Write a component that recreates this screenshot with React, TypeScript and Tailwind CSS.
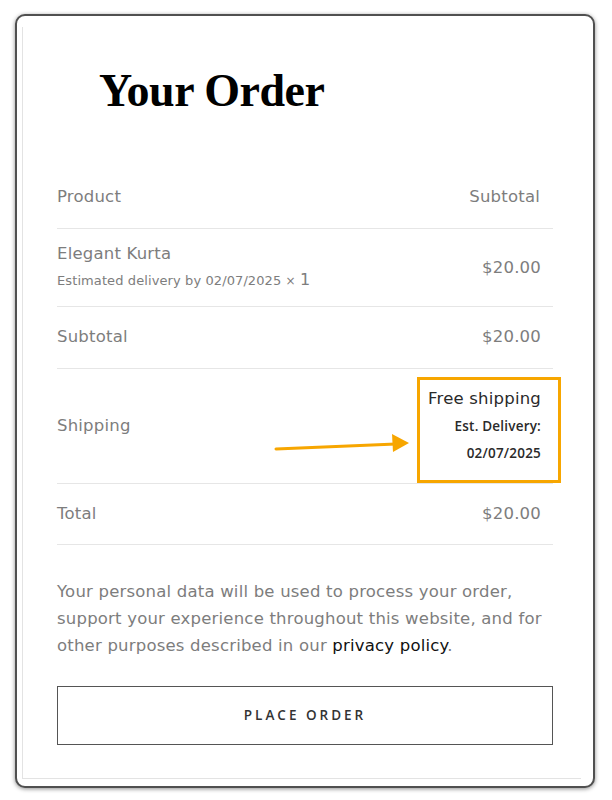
import React from "react";

const sans = { fontFamily: '"DejaVu Sans", "Open Sans", sans-serif' };
const open = { fontFamily: '"Open Sans", "DejaVu Sans", sans-serif' };

function Row({ left, right, className = "" }: { left: React.ReactNode; right: React.ReactNode; className?: string }) {
  return (
    <div className={`flex items-center justify-between border-b border-[#e6e6e6] ${className}`}>
      <div>{left}</div>
      <div className="pr-[12px] text-right">{right}</div>
    </div>
  );
}

export default function App() {
  return (
    <div className="relative w-[612px] h-[800px] bg-white pt-[14px] pl-[15px]" style={sans}>
      <div className="w-[580px] h-[774px] border-2 border-[#505050] rounded-[10px] shadow-[0_1px_4px_rgba(0,0,0,0.45)] bg-white overflow-hidden">
        <div className="ml-[5px] mt-[11px] w-[559px] h-[752px] border-l border-b border-[#e3e3e3] pl-[34px]">
          <div className="w-[496px] text-[#7d7d7d] text-[16.5px] tracking-[0.2px]">
            <h1
              className="ml-[42px] pt-[41px] text-[46px] leading-[46px] font-bold text-black tracking-[-0.5px]"
              style={{ fontFamily: '"Liberation Serif", "Times New Roman", serif' }}
            >
              Your Order
            </h1>
            <div className="mt-[53px]">
              <Row className="h-[62px]" left="Product" right={<span className="pr-[1px]">Subtotal</span>} />
              <div className="flex items-center justify-between border-b border-[#e6e6e6] h-[78px]">
                <div>
                  <div className="leading-[22px]">Elegant Kurta</div>
                  <div className="mt-[4px] text-[13px] leading-[22px] tracking-[0.1px]">
                    Estimated delivery by 02/07/2025 <span className="text-[12px]">×</span>{" "}
                    <span className="text-[16px]">1</span>
                  </div>
                </div>
                <div className="pr-[12px] pt-[2px]">$20.00</div>
              </div>
              <Row className="h-[62px]" left="Subtotal" right="$20.00" />
              <div className="flex items-center justify-between border-b border-[#e6e6e6] h-[115px]">
                <div className="pt-[1px]">Shipping</div>
                <div className="pr-[12px] text-right text-[#2a2a2a] pt-[1px]">
                  <div className="leading-[24px] text-[16.5px]">Free shipping</div>
                  <div className="mt-[2px] leading-[27px] text-[13.5px] font-semibold tracking-[0.2px]" style={open}>
                    Est. Delivery:
                  </div>
                  <div className="leading-[27px] text-[13.5px] font-semibold tracking-[0.2px]" style={open}>
                    02/07/2025
                  </div>
                </div>
              </div>
              <Row className="h-[61px]" left="Total" right="$20.00" />
            </div>
            <p className="mt-[33px] leading-[27px]">
              Your personal data will be used to process your order, support your experience throughout this website, and for other purposes described in our{" "}
              <span className="text-[#111]">privacy policy</span>.
            </p>
            <button
              className="mt-[27px] w-[496px] h-[59px] border border-[#555] text-[13.5px] font-semibold tracking-[3px] text-[#333] bg-white"
              style={open}
            >
              PLACE ORDER
            </button>
          </div>
        </div>
      </div>

      <div className="absolute left-[417px] top-[377px] w-[144px] h-[106px] border-[3px] border-[#f7a600]" />
      <svg className="absolute left-[270px] top-[430px]" width="145" height="26" viewBox="0 0 145 26">
        <line x1="6" y1="19" x2="126" y2="14" stroke="#f7a600" strokeWidth="3" strokeLinecap="round" />
        <polygon points="122,4 139,13 123,22" fill="#f7a600" />
      </svg>
    </div>
  );
}
